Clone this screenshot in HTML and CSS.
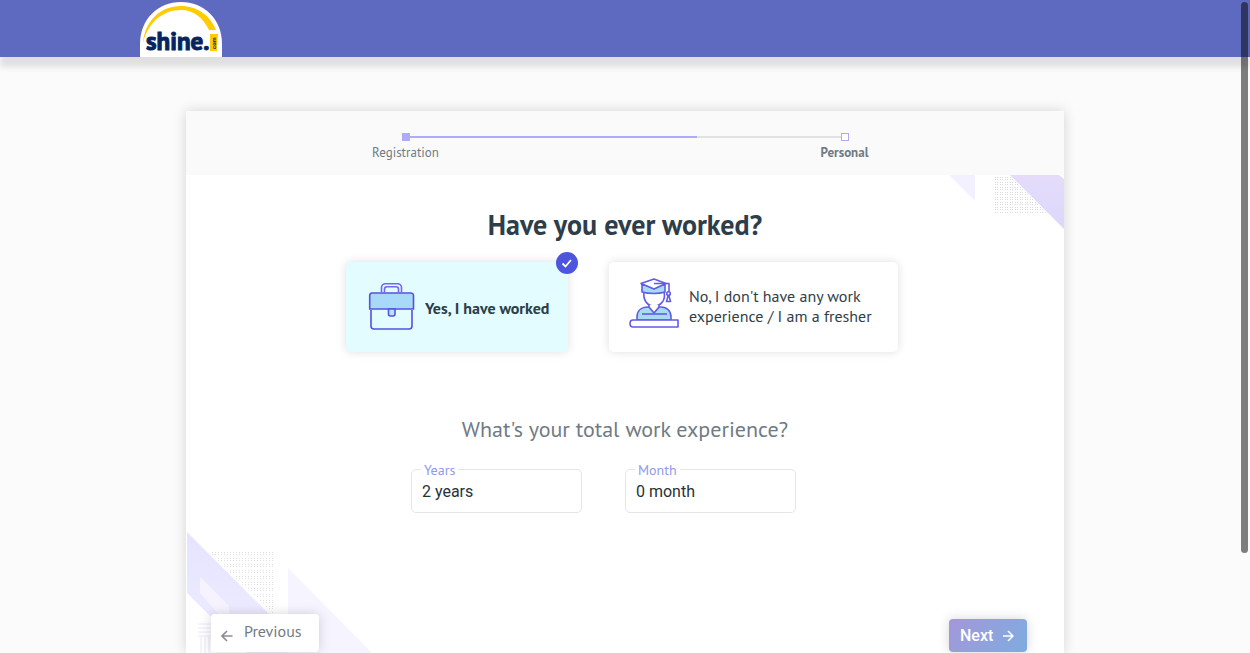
FILE: index.html
```html
<!DOCTYPE html>
<html lang="en">
<head>
<meta charset="utf-8">
<meta name="viewport" content="width=device-width, initial-scale=1">
<title>Shine registration</title>
<link rel="stylesheet" href="styles.css">
</head>
<body>
<header class="header">
  <div class="header-inner">
    <a class="logo" href="#" aria-label="shine.com">
      <svg width="82" height="55" viewBox="0 0 82 55">
        <path d="M0 55V42C0 17 18 0 41 0s41 17 41 42v13z" fill="#fff"/>
        <path d="M3 41C5 18 21 4 41 4c16 0 29 9 35 24h-7C63 15 53 8 41 8 22 8 8 21 3 41z" fill="#fc0"/>
        <path d="M70 32h8l-1 17h-7z" fill="#fc0"/>
        <text class="logo-text" x="6" y="48">shine.</text>
        <text class="logo-com" transform="translate(76 47) rotate(-90)">com</text>
      </svg>
    </a>
  </div>
</header>
<main class="page">
  <form class="card">
    <div class="steps">
      <div class="track">
        <span class="dot dot-done"></span><span class="line line-done"></span><span class="line line-rest"></span><span class="dot"></span>
      </div>
      <div class="step-labels"><span class="step">Registration</span><span class="step step-current">Personal</span></div>
    </div>
    <div class="content">
      <svg class="art art-top" width="115" height="54" viewBox="0 0 115 54" aria-hidden="true">
        <defs>
          <pattern id="dots" width="5" height="5" patternUnits="userSpaceOnUse"><path d="M1 2h1v1H1zM3 2h1v1H3zM1 4h1v1H1zM3 4h1v1H3z" fill="#dadade"/></pattern>
          <linearGradient id="lilac" x2="0" y2="1"><stop stop-color="#e5dcfa"/><stop offset="1" stop-color="#dbd8fc"/></linearGradient>
        </defs>
        <path d="M0 0h26v26z" fill="#f3f0ff"/>
        <path d="M45 0h16l39 39H45z" fill="url(#dots)"/>
        <path d="M61 0h49l5 4v50z" fill="url(#lilac)"/>
      </svg>
      <svg class="art art-bottom" width="185" height="121" viewBox="0 0 185 121" aria-hidden="true">
        <defs>
          <pattern id="dots-small" width="6" height="6" patternUnits="userSpaceOnUse"><path d="M1 2h1v1H1zM4 2h1v1H4zM1 4h1v1H1zM4 4h1v1H4z" fill="#e0e0e4"/></pattern>
          <linearGradient id="haze" x2="0" y2="1"><stop stop-color="#e5e4ff"/><stop offset="1" stop-color="#f0edff"/></linearGradient>
        </defs>
        <path d="M22 20h64v62z" fill="url(#dots-small)"/>
        <path d="M0 0l121 121H60L0 61z" fill="url(#haze)"/>
        <path d="M13 45l29 29v20L13 61z" fill="#f6f3ff"/>
        <path d="M101 36l84 85h-84z" fill="#f6f4ff"/>
        <path d="M11 92h15M11 96h15M11 100h15M11 104h15M14 105v16M18 105v16M22 105v16" stroke="#e9e8fc" fill="none"/>
      </svg>
      <h1 class="title">Have you ever worked?</h1>
      <div class="choices">
        <button class="choice choice-on" type="button" aria-pressed="true">
          <svg class="choice-icon" width="46" height="46" viewBox="0 0 46 46" fill="none" stroke="#5551e3" stroke-width="1.6">
            <path d="M2 26v16a3 3 0 0 0 3 3h35a3 3 0 0 0 3-3V26"/>
            <path d="M3 9h39a2.500 2.500 0 0 1 2.500 2.500V25H.700V11.500A2.500 2.500 0 0 1 3 9z" fill="#a9d9f8"/>
            <path d="M13 8V3a4 4 0 0 1 4-4h12a4 4 0 0 1 4 4v5M16 8V4.500A2.500 2.500 0 0 1 18.500 2h9A2.500 2.500 0 0 1 30 4.500V8" transform="translate(-.5 .7)" stroke="#7168ec"/>
            <path d="M19.500 25v5a2 2 0 0 0 2 2h2.500a2 2 0 0 0 2-2v-5z" fill="#b9e2fb"/>
          </svg>
          <span>Yes, I have worked</span>
          <svg class="badge" width="22" height="22" viewBox="0 0 22 22"><circle cx="11" cy="11" r="11" fill="#4d55de"/><path d="M6.500 11.500l3 3 5.500-6.500" fill="none" stroke="#fff" stroke-width="1.800"/></svg>
        </button>
        <button class="choice choice-off" type="button" aria-pressed="false">
          <svg class="person" width="50" height="50" viewBox="0 0 50 50" fill="none" stroke="#625be8" stroke-width="1.600" stroke-linejoin="round">
            <path d="M15 14c-1 8 3 14 10 14s12-6 10-14" fill="#fff"/>
            <path d="M8 42V39c0-6 4-10 11-10h2l4 5 5-5h2c6 0 10 4 10 10v3z" fill="#a6dcf0"/>
            <path d="M20 27v2l5 6 5-6v-2" fill="#fff"/>
            <path d="M13 36h25"/>
            <path d="M13 6v8c7 2 17 2 23 0V6l-11 4z" fill="#a6dcf0"/>
            <path d="M12 5.500L25 1l12 4.500L25 11z" fill="#fff"/>
            <path d="M25 5.500h15V14M39 18l-1.500 5.500h4L40 18z"/>
            <circle cx="39.500" cy="15.500" r="1.800" fill="#fff"/>
            <path d="M4 42h45v7H4c-4 0-4-7 0-7z" fill="#fff"/>
          </svg>
          <span>No, I don't have any work<br>experience / I am a fresher</span>
        </button>
      </div>
      <h2 class="subtitle">What's your total work experience?</h2>
      <div class="fields">
        <div class="field"><label for="years">Years</label><select id="years"><option>2 years</option><option>3 years</option></select></div>
        <div class="field"><label for="month">Month</label><select id="month"><option>0 month</option><option>1 month</option></select></div>
      </div>
      <div class="actions">
        <button class="btn btn-prev" type="button"><svg width="12" height="12" viewBox="0 0 12 12" fill="none" stroke="#8d8d98" stroke-width="1.700"><path d="M11.500 6H1.500M6 1L1 6l5 5"/></svg><span>Previous</span></button>
        <button class="btn btn-next" type="button"><span>Next</span><svg width="12" height="12" viewBox="0 0 12 12" fill="none" stroke="#fff" stroke-width="1.500"><path d="M1 6h10M6 1l5 5-5 5"/></svg></button>
      </div>
    </div>
  </form>
</main>
<div class="scroll-thumb"></div>
</body>
</html>
```

FILE: styles.css
```css
* { box-sizing: border-box; }

body {
  margin: 0;
  height: 100vh;
  overflow: hidden;
  display: flex;
  flex-direction: column;
  background: #fbfbfb;
  color: #2d3e4a;
  font-family: "PT Sans", Lato, sans-serif;
}

button, select { font: inherit; color: inherit; }

.header {
  background: #5d6abf;
  box-shadow: 0 10px 6px rgba(0, 0, 0, 0.11);
}
.header-inner { max-width: 970px; margin: 0 auto; padding-top: 2px; }
.logo { display: block; width: 82px; }
.logo svg { display: block; }
.logo-text { font: bold 25px "PT Sans", Roboto, sans-serif; fill: #07245e; stroke: #07245e; stroke-width: 1px; }
.logo-com { font: bold 6px Roboto, sans-serif; fill: #07245e; }

.page { flex: 1; display: flex; justify-content: center; padding-top: 54px; }

.card {
  width: 100%;
  max-width: 878px;
  display: flex;
  flex-direction: column;
  background: #fff;
  box-shadow: 0 0 12px rgba(0, 0, 0, 0.16);
}

.steps { height: 64px; padding-top: 22px; background: #fafafa; }
.track { display: flex; align-items: center; max-width: 447px; margin: 0 auto; }
.dot { width: 8px; height: 8px; border: 1px solid #afabf8; background: #fff; }
.dot-done { background: #afabf8; }
.line { height: 2px; }
.line-done { flex: 2; background: #afabf8; }
.line-rest { flex: 1; background: #e0e2e2; }
.step-labels { display: flex; justify-content: space-between; max-width: 519px; margin: 3px auto 0; }
.step { width: 80px; text-align: center; font-size: 13px; line-height: 18px; color: #6f7b83; }
.step-current { font-weight: 700; }

.content { position: relative; flex: 1; display: flex; flex-direction: column; align-items: center; padding-top: 32px; }
.art { position: absolute; }
.art-top { top: 0; right: 0; }
.art-bottom { bottom: 0; left: 1px; }

.title { margin: 0 0 19px; font-size: 28px; line-height: 36px; font-weight: 700; }
.choices { display: flex; gap: 41px; padding-right: 6px; }
.choice {
  position: relative;
  display: flex;
  align-items: center;
  gap: 10px;
  height: 90px;
  padding: 0 0 0 20px;
  border: 0;
  border-radius: 5px;
  background: #fff;
  box-shadow: 0 0 10px rgba(0, 0, 0, 0.13);
  font-size: 16px;
  line-height: 20px;
  text-align: left;
  white-space: nowrap;
}
.choice-on { width: 222px; padding-left: 23px; background: #e3fcff; font-weight: 700; }
.choice-off { width: 289px; }
.choice-on span { margin-top: 2px; }
.choice-off span { margin-top: -2px; }
.choice-icon { overflow: visible; }
.person { margin-top: -8px; }
.badge { position: absolute; top: -10px; right: -10px; }

.subtitle { margin: 62px 0 25px; font-size: 22px; line-height: 30px; font-weight: 400; color: #6f7b83; }
.fields { display: flex; gap: 43px; width: 428px; }
.field { position: relative; width: 171px; }
.field label {
  position: absolute;
  top: -8px;
  left: 10px;
  padding: 0 3px;
  background: #fff;
  color: #8f9aec;
  font-size: 14px;
  line-height: 18px;
}
.field select {
  display: block;
  width: 100%;
  height: 44px;
  padding: 0 10px;
  border: 1px solid #e4e5e7;
  border-radius: 5px;
  background: #fff;
  color: #263238;
  font-family: Roboto, sans-serif;
  font-size: 16px;
  appearance: none;
}

.actions {
  position: relative;
  display: flex;
  justify-content: space-between;
  align-items: flex-end;
  width: 100%;
  margin-top: auto;
  padding: 0 37px 1px 25px;
}
.btn { display: flex; align-items: center; border: 0; border-radius: 4px; box-shadow: 0 0 12px rgba(0, 0, 0, 0.16); }
.btn-prev { gap: 11px; height: 38px; width: 108px; padding: 0 10px; background: #fff; color: #6f7b83; font-size: 16px; }
.btn-prev svg { margin-top: 6px; }
.btn-prev span { margin-top: -4px; }
.btn-next {
  gap: 9px;
  width: 78px;
  height: 33px;
  padding: 0 11px;
  background: linear-gradient(120deg, #a497d9, #7eace0);
  color: #fff;
  font-family: Roboto, sans-serif;
  font-size: 16px;
  font-weight: 500;
}

.scroll-thumb { position: fixed; top: 2px; right: 2px; width: 7px; height: calc(100vh - 102px); border-radius: 4px; background: rgba(0, 0, 0, 0.5); }
```
